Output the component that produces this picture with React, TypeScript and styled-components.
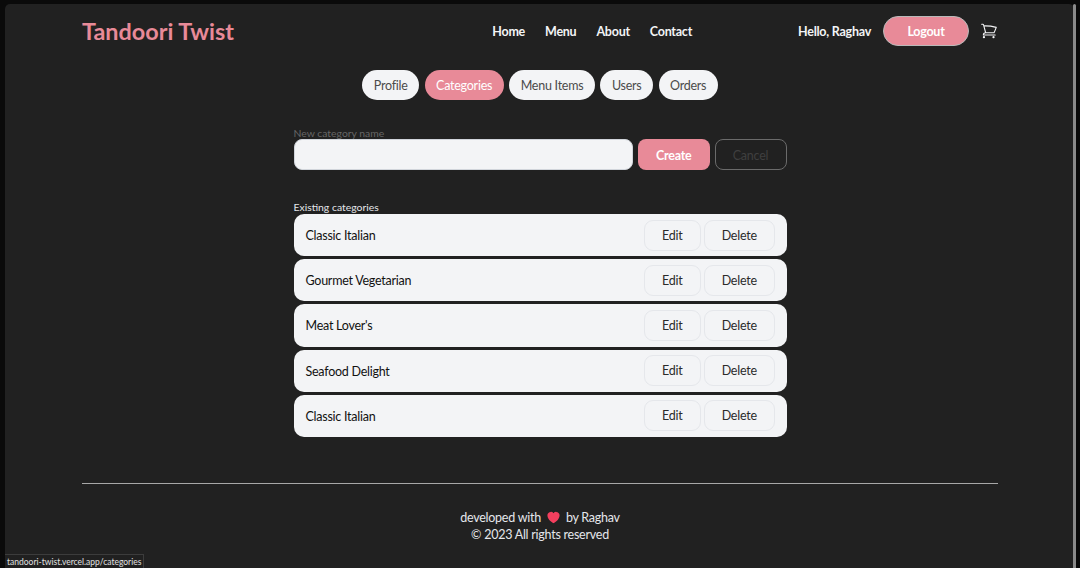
import React from "react";
import styled, { createGlobalStyle } from "styled-components";

const categories = [
  "Classic Italian",
  "Gourmet Vegetarian",
  "Meat Lover's",
  "Seafood Delight",
  "Classic Italian",
];

const tabs = ["Profile", "Categories", "Menu Items", "Users", "Orders"];
const links = ["Home", "Menu", "About", "Contact"];

export default function App() {
  return (
    <>
      <GlobalStyle />
      <Frame>
        <Page>
          <Header>
            <Logo>Tandoori Twist</Logo>
            <Nav>
              {links.map((link) => (
                <NavLink key={link}>{link}</NavLink>
              ))}
            </Nav>
            <UserArea>
              <Hello>Hello, Raghav</Hello>
              <LogoutButton>Logout</LogoutButton>
              <CartIcon viewBox="0 0 24 24" fill="none" stroke="currentColor" strokeWidth="1.5">
                <path
                  strokeLinecap="round"
                  strokeLinejoin="round"
                  d="M2.25 3h1.386c.51 0 .955.343 1.087.835l.383 1.437M7.5 14.25a3 3 0 00-3 3h15.75m-12.75-3h11.218c1.121-2.3 2.1-4.684 2.924-7.138a60.114 60.114 0 00-16.536-1.84M7.5 14.25L5.106 5.272M6 20.25a.75.75 0 11-1.5 0 .75.75 0 011.5 0zm12.75 0a.75.75 0 11-1.5 0 .75.75 0 011.5 0z"
                />
              </CartIcon>
            </UserArea>
          </Header>

          <Tabs>
            {tabs.map((tab) => (
              <Tab key={tab} $active={tab === "Categories"}>
                {tab}
              </Tab>
            ))}
          </Tabs>

          <Content>
            <FieldLabel>New category name</FieldLabel>
            <CreateRow>
              <NameInput />
              <CreateButton>Create</CreateButton>
              <CancelButton>Cancel</CancelButton>
            </CreateRow>

            <ListLabel>Existing categories</ListLabel>
            <List>
              {categories.map((name, i) => (
                <Row key={i}>
                  <RowName>{name}</RowName>
                  <RowActions>
                    <RowButton $width={56.5}>Edit</RowButton>
                    <RowButton $width={70.5}>Delete</RowButton>
                  </RowActions>
                </Row>
              ))}
            </List>
          </Content>

          <Footer>
            <FooterLine>
              developed with
              <HeartIcon viewBox="0 0 24 24" fill="#f43f5e">
                <path d="M11.645 20.91l-.007-.003-.022-.012a15.247 15.247 0 01-.383-.218 25.18 25.18 0 01-4.244-3.17C4.688 15.36 2.25 12.174 2.25 8.25 2.25 5.322 4.714 3 7.688 3A5.5 5.5 0 0112 5.052 5.5 5.5 0 0116.313 3c2.973 0 5.437 2.322 5.437 5.25 0 3.925-2.438 7.111-4.739 9.256a25.175 25.175 0 01-4.244 3.17 15.247 15.247 0 01-.383.219l-.022.012-.007.004-.003.001a.752.752 0 01-.704 0l-.003-.001z" />
              </HeartIcon>
              by Raghav
            </FooterLine>
            <FooterLine>© 2023 All rights reserved</FooterLine>
          </Footer>
        </Page>
        <Scrollbar />
        <StatusTip>tandoori-twist.vercel.app/categories</StatusTip>
      </Frame>
    </>
  );
}

const GlobalStyle = createGlobalStyle`
  html, body {
    margin: 0;
    height: 568px;
    overflow: hidden;
    background: #0a0a0a;
  }
  * {
    box-sizing: border-box;
  }
  body {
    font-family: Lato, "Open Sans", sans-serif;
  }
  button {
    font-family: Lato, "Open Sans", sans-serif;
  }
`;

const Frame = styled.div`
  position: relative;
  display: flex;
  height: 568px;
  padding: 4px 4px 0 5px;
  background: #0a0a0a;
`;

const Page = styled.div`
  flex: 1;
  padding: 12px 76px 0 77px;
  background: #212121;
  border-radius: 5px 5px 0 0;
`;

const Scrollbar = styled.div`
  width: 3px;
  margin-left: -1px;
  background: #8a8a8a;
  border-radius: 2px 2px 0 0;
`;

const Header = styled.header`
  display: flex;
  align-items: center;
  height: 30px;
`;

const Logo = styled.div`
  font-size: 23.4px;
  font-weight: 700;
  color: #e88a98;
`;

const Nav = styled.nav`
  display: flex;
  gap: 20px;
  margin-left: auto;
  padding-top: 1px;
`;

const NavLink = styled.a`
  font-size: 12.5px;
  font-weight: 700;
  letter-spacing: -0.25px;
  color: #f3f4f6;
`;

const UserArea = styled.div`
  display: flex;
  align-items: center;
  margin-left: 106px;
`;

const Hello = styled.span`
  padding-top: 1px;
  font-size: 12.5px;
  font-weight: 700;
  letter-spacing: -0.25px;
  color: #f3f4f6;
`;

const LogoutButton = styled.button`
  width: 86px;
  height: 30px;
  margin-left: 12px;
  padding: 1px 0 0;
  font-size: 12.5px;
  font-weight: 700;
  letter-spacing: -0.25px;
  color: #fff;
  background: #e88a98;
  border: 1px solid #b9b9b9;
  border-radius: 15px;
`;

const CartIcon = styled.svg`
  width: 18px;
  height: 18px;
  margin-left: 11px;
  margin-top: -1px;
  color: #f3f4f6;
`;

const Tabs = styled.div`
  display: flex;
  justify-content: center;
  gap: 5.5px;
  margin-top: 24px;
`;

const Tab = styled.button<{ $active?: boolean }>`
  height: 30px;
  padding: 0 11.5px;
  font-size: 12.5px;
  letter-spacing: -0.25px;
  color: ${(p) => (p.$active ? "#fff" : "#4b4b4b")};
  background: ${(p) => (p.$active ? "#e88a98" : "#f3f4f6")};
  border: none;
  border-radius: 15px;
`;

const Content = styled.main`
  width: 493px;
  margin: 0 auto;
  padding-top: 27px;
`;

const FieldLabel = styled.label`
  display: block;
  height: 12px;
  font-size: 10.4px;
  line-height: 12px;
  color: #666;
`;

const CreateRow = styled.div`
  display: flex;
  gap: 5px;
`;

const NameInput = styled.input`
  flex: 1;
  min-width: 0;
  height: 31px;
  margin-right: 0.5px;
  background: #f3f4f6;
  border: 1px solid #d1d5db;
  border-radius: 8px;
`;

const CreateButton = styled.button`
  width: 71.5px;
  height: 31px;
  padding: 1px 0 0;
  font-size: 12.5px;
  font-weight: 700;
  letter-spacing: -0.25px;
  color: #fff;
  background: #e88a98;
  border: none;
  border-radius: 8px;
`;

const CancelButton = styled.button`
  width: 72px;
  height: 31px;
  padding: 1px 0 0;
  font-size: 12.5px;
  letter-spacing: -0.25px;
  color: #3f3f3f;
  background: transparent;
  border: 1px solid #6b6b6b;
  border-radius: 8px;
`;

const ListLabel = styled.div`
  height: 13px;
  margin-top: 31px;
  font-size: 10.4px;
  line-height: 12px;
  color: #e5e7eb;
`;

const List = styled.div`
  display: flex;
  flex-direction: column;
  gap: 3px;
`;

const Row = styled.div`
  display: flex;
  align-items: center;
  justify-content: space-between;
  height: 42.2px;
  padding: 0 12px;
  background: #f3f4f6;
  border-radius: 10px;
`;

const RowName = styled.span`
  padding-top: 1px;
  font-size: 12.5px;
  letter-spacing: -0.25px;
  color: #111;
`;

const RowActions = styled.div`
  display: flex;
  gap: 3.5px;
`;

const RowButton = styled.button<{ $width: number }>`
  width: ${(p) => p.$width}px;
  height: 31px;
  padding: 0;
  font-size: 12.5px;
  letter-spacing: -0.25px;
  color: #2b2b2b;
  background: #f3f4f6;
  border: 1px solid #e5e7eb;
  border-radius: 9px;
`;

const Footer = styled.footer`
  margin-top: 46px;
  padding-top: 25px;
  border-top: 1px solid #a8a8a8;
`;

const FooterLine = styled.div`
  display: flex;
  align-items: center;
  justify-content: center;
  height: 17px;
  font-size: 12.5px;
  letter-spacing: -0.25px;
  color: #e5e7eb;
`;

const HeartIcon = styled.svg`
  width: 15px;
  height: 15px;
  margin: 0 5px;
`;

const StatusTip = styled.div`
  position: absolute;
  left: 5px;
  bottom: 0;
  height: 14px;
  padding: 0 2px;
  font-size: 8.5px;
  line-height: 15px;
  color: #e0e0e0;
  background: #202020;
  border: 1px solid #3c3c3c;
  border-bottom: none;
  border-left: none;
`;
